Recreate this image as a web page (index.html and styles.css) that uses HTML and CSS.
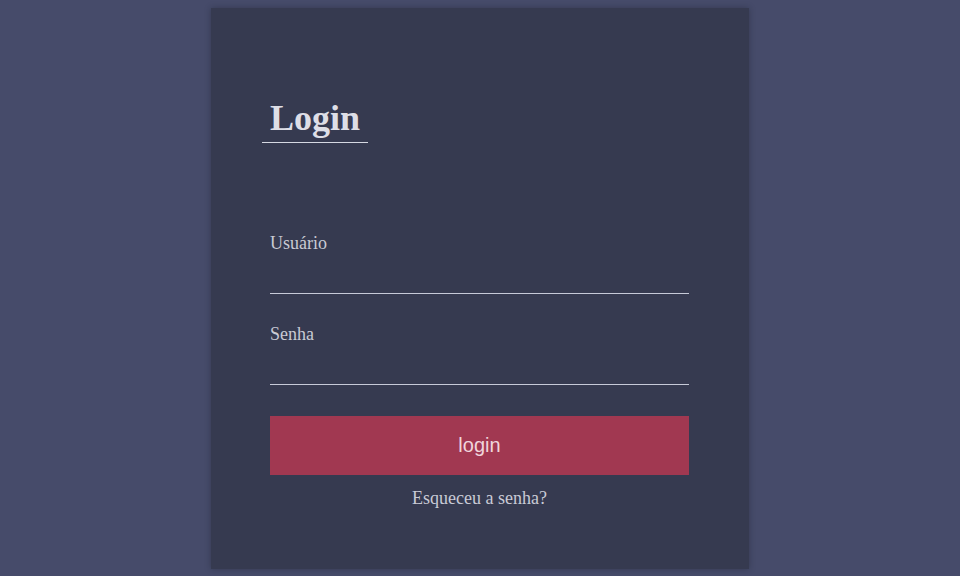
FILE: index.html
```html
<!DOCTYPE html>
<html lang="pt">
<head>
<meta charset="utf-8">
<title>Login</title>
<link rel="stylesheet" href="styles.css">
</head>
<body>
  <main class="card">
    <h1 class="title">Login</h1>
    <form class="form">
      <div class="field">
        <label class="label" for="user">Usuário</label>
        <input class="input" id="user" type="text">
      </div>
      <div class="field">
        <label class="label" for="pass">Senha</label>
        <input class="input" id="pass" type="password">
      </div>
      <button class="btn" type="button">login</button>
      <a class="forgot" href="#">Esqueceu a senha?</a>
    </form>
  </main>
</body>
</html>
```
FILE: styles.css
```css
html, body {
  height: 100%;
}
body {
  margin: 0;
  padding: 8px 0 0;
  box-sizing: border-box;
  background: #464b6a;
  font-family: "Liberation Serif", "Times New Roman", serif;
  color: #d4d5de;
}
.card {
  box-sizing: border-box;
  width: 538px;
  height: 561px;
  margin: 0 auto;
  padding: 90px 60px 0 59px;
  background: #363a50;
  box-shadow: 0 0 6px rgba(20, 22, 35, 0.35);
}
.title {
  display: inline-block;
  margin: 0 0 0 -8px;
  padding: 0 8px 3px;
  font-size: 36px;
  line-height: 41px;
  font-weight: bold;
  color: #dedee6;
  border-bottom: 1px solid #d6d8e2;
}
.form {
  display: flex;
  flex-direction: column;
  margin-top: 90px;
}
.field {
  display: flex;
  flex-direction: column;
  margin-bottom: 30px;
}
.field + .field {
  margin-bottom: 31px;
}
.label {
  font-size: 18px;
  line-height: 21px;
  color: #c9cad4;
}
.input {
  box-sizing: content-box;
  height: 39px;
  padding: 0;
  margin: 0;
  border: 0;
  border-bottom: 1px solid #c7cad8;
  background: transparent;
  outline: none;
  color: #e0e0e8;
  font-size: 18px;
}
.btn {
  height: 59px;
  margin: 0;
  border: 0;
  background: #a13851;
  color: #f0d5dc;
  font-family: "Liberation Sans", Arial, sans-serif;
  font-size: 20px;
  cursor: pointer;
}
.forgot {
  margin-top: 13px;
  align-self: center;
  font-size: 18px;
  line-height: 21px;
  color: #c9cad6;
  text-decoration: none;
}
```
